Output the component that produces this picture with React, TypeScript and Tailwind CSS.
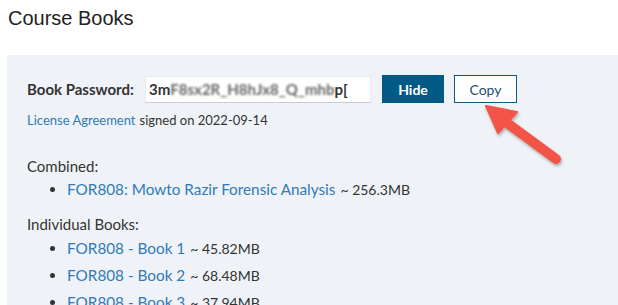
import React from "react";

const font = { fontFamily: "Lato, 'Noto Sans', sans-serif" };

function Item({ title, size }: { title: string; size: string }) {
  return (
    <li className="flex items-center h-[20px] text-[15px]">
      <span className="w-[5px] h-[5px] rounded-full bg-[#333] ml-[23px] mr-[12px]" />
      <span className="text-[#337ab7] text-[15.3px]">{title}</span>
      <span className="text-[#333] text-[14px] ml-[5px]">~ {size}</span>
    </li>
  );
}

export default function App() {
  return (
    <div className="relative w-[618px] h-[305px] overflow-hidden bg-white pl-[7px] pt-[6px]">
      <h1
        className="text-[20px] leading-[24px] text-[#222] pl-[1px]"
        style={{ fontFamily: "'Liberation Sans', Arial, sans-serif" }}
      >
        Course Books
      </h1>
      <div className="mt-[25px] bg-[#eff3f7] pl-[20px] pt-[20px] h-[300px] text-[#333]" style={font}>
        <div className="flex items-center h-[28px]">
          <span className="font-bold text-[15px] w-[118px]">Book Password:</span>
          <div className="w-[226px] h-[27px] bg-white border border-[#e8ebee] border-b-[#c9cdd2] flex items-center pl-[3px] text-[15px] font-bold text-[#333] overflow-hidden whitespace-nowrap">
            <span>3m</span>
            <span className="blur-[1.2px] text-[#666]">F8sx2R_H8hJx8_Q_mhb</span>
            <span>p[</span>
          </div>
          <button className="ml-[11px] w-[62px] h-[28px] bg-[#005a84] text-white font-bold text-[14px]">
            Hide
          </button>
          <button className="ml-[10px] w-[63px] h-[28px] bg-white border-[1.5px] border-[#0d5a80] text-[#1d4e6f] text-[14px]">
            Copy
          </button>
        </div>
        <div className="mt-[8px] h-[20px] flex items-center text-[13px]">
          <span className="text-[#337ab7]">License Agreement</span>
          <span className="ml-[4px]">signed on 2022-09-14</span>
        </div>
        <div className="mt-[25px] h-[20px] flex items-center text-[15px]">Combined:</div>
        <ul className="mt-[3px]">
          <Item title="FOR808: Mowto Razir Forensic Analysis" size="256.3MB" />
        </ul>
        <div className="mt-[15px] h-[20px] flex items-center text-[15px]">Individual Books:</div>
        <ul className="mt-[4px] flex flex-col gap-[7px]">
          <Item title="FOR808 - Book 1" size="45.82MB" />
          <Item title="FOR808 - Book 2" size="68.48MB" />
          <Item title="FOR808 - Book 3" size="37.94MB" />
        </ul>
      </div>
      <svg className="absolute left-0 top-0 pointer-events-none" width="618" height="305">
        <defs>
          <filter id="sh" x="-20%" y="-20%" width="140%" height="140%">
            <feDropShadow dx="1" dy="2" stdDeviation="1.5" floodColor="#000" floodOpacity="0.3" />
          </filter>
        </defs>
        <g filter="url(#sh)">
          <line x1="556" y1="159" x2="503" y2="120" stroke="#f25546" strokeWidth="10" strokeLinecap="round" />
          <polygon points="486,106 517,112 498,133" fill="#f25546" stroke="#f25546" strokeWidth="2" strokeLinejoin="round" />
        </g>
      </svg>
    </div>
  );
}
